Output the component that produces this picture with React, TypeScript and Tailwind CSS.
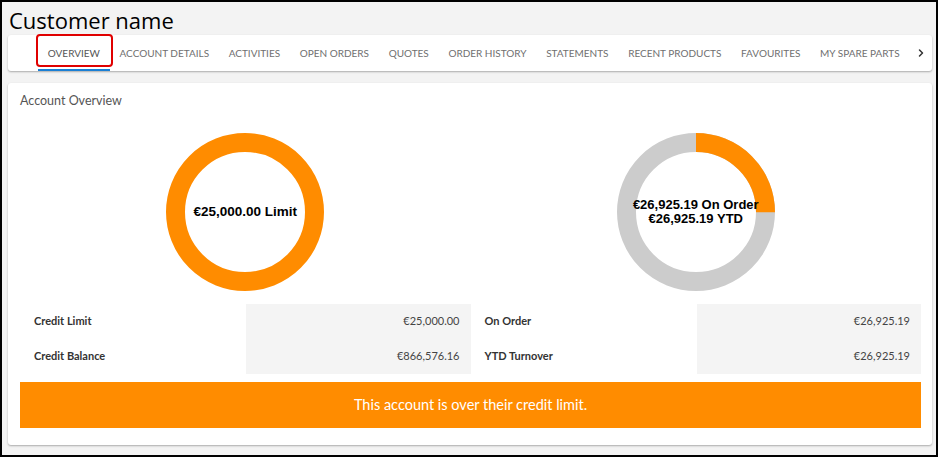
import React from 'react';
import { ChevronRight } from 'lucide-react';

const tabs = [
  'Overview',
  'Account Details',
  'Activities',
  'Open Orders',
  'Quotes',
  'Order History',
  'Statements',
  'Recent Products',
  'Favourites',
  'My Spare Parts',
];

const Donut: React.FC<{ part?: number; track: string; lines: string[]; size: string }> = ({
  part,
  track,
  lines,
  size,
}) => {
  const r = 69.5;
  const c = 2 * Math.PI * r;
  return (
    <div className="relative h-[158px] w-[158px]">
      <svg width="158" height="158" viewBox="0 0 158 158">
        <circle cx="79" cy="79" r={r} fill="none" stroke={track} strokeWidth="19" />
        {part !== undefined && (
          <circle
            cx="79"
            cy="79"
            r={r}
            fill="none"
            stroke="#ff8c00"
            strokeWidth="19"
            strokeDasharray={`${c * part} ${c}`}
            transform="rotate(-90 79 79)"
          />
        )}
      </svg>
      <div
        className={`absolute inset-0 flex flex-col items-center justify-center font-['Liberation_Sans',Arial,sans-serif] font-bold leading-[14px] text-black ${size}`}
      >
        {lines.map((l) => (
          <span key={l}>{l}</span>
        ))}
      </div>
    </div>
  );
};

const SummaryTable: React.FC<{ rows: [string, string][] }> = ({ rows }) => (
  <div className="grid grid-cols-[226px_1fr]">
    <div className="flex flex-col">
      {rows.map(([label]) => (
        <div key={label} className="flex h-[35px] items-center pl-[14px] text-[11px] font-bold text-[#333]">
          {label}
        </div>
      ))}
    </div>
    <div className="flex flex-col bg-[#f4f4f4]">
      {rows.map(([label, value]) => (
        <div key={label} className="flex h-[35px] items-center justify-end pr-[11px] text-[11px] text-[#444]">
          {value}
        </div>
      ))}
    </div>
  </div>
);

const App: React.FC = () => {
  return (
    <div className="box-border h-[457px] w-[938px] overflow-hidden border-2 border-black bg-[#f3f3f3] pl-[6px] pr-[4px] font-['Lato',sans-serif]">
      <h1 className="h-[33px] pl-[1px] pt-[3px] font-['Open_Sans',sans-serif] text-[22px] font-normal leading-[30px] text-black">
        Customer name
      </h1>

      {/* Tabs */}
      <div className="flex h-[36px] items-stretch rounded-[3px] bg-white pl-[30px] shadow-[0_1px_2px_rgba(0,0,0,0.3)]">
        {tabs.map((tab, i) => (
          <div
            key={tab}
            className={`relative flex shrink-0 items-center whitespace-nowrap px-[9.8px] text-[10px] uppercase ${
              i === 0 ? 'border-b-2 border-[#1a7fd4] pt-[2px] text-[#555]' : 'text-[#6f6f6f]'
            }`}
          >
            {tab}
            {i === 0 && (
              <div className="absolute -top-[1px] -left-[2px] -right-[3px] bottom-[2px] rounded-[4px] border-2 border-[#e00000]" />
            )}
          </div>
        ))}
        <div className="flex items-center pl-[6px] text-[#333]">
          <ChevronRight size={12} strokeWidth={3} />
        </div>
      </div>

      {/* Account overview card */}
      <div className="mt-[12px] rounded-[3px] bg-white pl-[12px] pr-[11px] pt-[10px] pb-[17px] shadow-[0_1px_2px_rgba(0,0,0,0.3)]">
        <div className="text-[12.5px] leading-[16px] text-[#555]">Account Overview</div>

        <div className="mt-[24px] grid grid-cols-2">
          <div className="flex justify-center">
            <Donut track="#ff8c00" size="text-[13.5px]" lines={['€25,000.00 Limit']} />
          </div>
          <div className="flex justify-center">
            <Donut
              track="#cccccc"
              part={0.25}
              size="text-[13px]"
              lines={['€26,925.19 On Order', '€26,925.19 YTD']}
            />
          </div>
        </div>

        <div className="mt-[13px] grid grid-cols-2">
          <SummaryTable
            rows={[
              ['Credit Limit', '€25,000.00'],
              ['Credit Balance', '€866,576.16'],
            ]}
          />
          <SummaryTable
            rows={[
              ['On Order', '€26,925.19'],
              ['YTD Turnover', '€26,925.19'],
            ]}
          />
        </div>

        <div className="mt-[8px] flex h-[46px] items-center justify-center bg-[#ff8c00] text-[14.5px] text-white">
          This account is over their credit limit.
        </div>
      </div>
    </div>
  );
};

export default App;
